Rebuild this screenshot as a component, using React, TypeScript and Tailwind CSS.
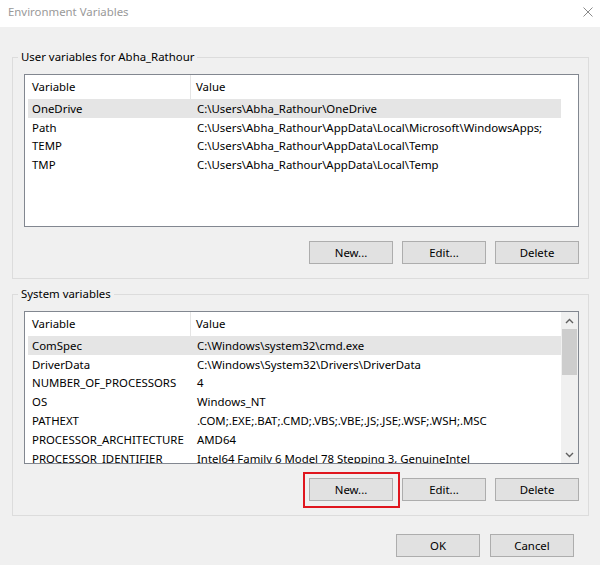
import React from "react";

type Row = { name: string; value: string };

const userVars: Row[] = [
    { name: "OneDrive", value: "C:\\Users\\Abha_Rathour\\OneDrive" },
    { name: "Path", value: "C:\\Users\\Abha_Rathour\\AppData\\Local\\Microsoft\\WindowsApps;" },
    { name: "TEMP", value: "C:\\Users\\Abha_Rathour\\AppData\\Local\\Temp" },
    { name: "TMP", value: "C:\\Users\\Abha_Rathour\\AppData\\Local\\Temp" },
];

const systemVars: Row[] = [
    { name: "ComSpec", value: "C:\\Windows\\system32\\cmd.exe" },
    { name: "DriverData", value: "C:\\Windows\\System32\\Drivers\\DriverData" },
    { name: "NUMBER_OF_PROCESSORS", value: "4" },
    { name: "OS", value: "Windows_NT" },
    { name: "PATHEXT", value: ".COM;.EXE;.BAT;.CMD;.VBS;.VBE;.JS;.JSE;.WSF;.WSH;.MSC" },
    { name: "PROCESSOR_ARCHITECTURE", value: "AMD64" },
    { name: "PROCESSOR_IDENTIFIER", value: "Intel64 Family 6 Model 78 Stepping 3, GenuineIntel" },
];

const Button = ({ label }: { label: string }) => (
    <button className="w-[84px] h-[23px] bg-[#e1e1e1] border border-[#adadad] text-black leading-none">
        {label}
    </button>
);

const VarList = ({ rows, scroll }: { rows: Row[]; scroll?: boolean }) => (
    <div className="ml-[11px] mr-[9px] h-[153px] border border-[#828790] bg-white flex overflow-hidden">
        <div className="flex-1 flex flex-col">
            <div className="h-[24px] flex items-center shrink-0">
                <div className="w-[166px] h-full flex items-center pl-[7px] border-r border-[#e5e5e5]">Variable</div>
                <div className="pl-[5px]">Value</div>
            </div>
            {rows.map((row, i) => (
                <div
                    key={row.name}
                    className={`h-[18.8px] shrink-0 flex items-center ml-[3px] whitespace-nowrap ${i === 0 ? "bg-[#e5e5e5]" : ""}`}
                >
                    <div className="w-[163px] pl-[4px]">{row.name}</div>
                    <div className="pl-[6px]">{row.value}</div>
                </div>
            ))}
        </div>
        {scroll ? (
            <div className="w-[17px] bg-[#f0f0f0] flex flex-col items-center shrink-0">
                <div className="h-[17px] flex items-center justify-center">
                    <svg width="9" height="6" viewBox="0 0 9 6">
                        <path d="M1 5 L4.5 1.5 L8 5" fill="none" stroke="#606060" strokeWidth="1.4" />
                    </svg>
                </div>
                <div className="w-[15px] h-[46px] bg-[#cdcdcd]" />
                <div className="flex-1" />
                <div className="h-[17px] flex items-center justify-center">
                    <svg width="9" height="6" viewBox="0 0 9 6">
                        <path d="M1 1 L4.5 4.5 L8 1" fill="none" stroke="#606060" strokeWidth="1.4" />
                    </svg>
                </div>
            </div>
        ) : (
            <div className="w-[17px] shrink-0" />
        )}
    </div>
);

const Group = ({ title, rows, scroll, highlight }: { title: string; rows: Row[]; scroll?: boolean; highlight?: boolean }) => (
    <fieldset className="border border-[#dcdcdc] pb-[14px]">
        <legend className="ml-[5px] px-[3px] leading-[16px]">{title}</legend>
        <div className="mt-[9px]">
            <VarList rows={rows} scroll={scroll} />
        </div>
        <div className="mt-[14px] mr-[9px] flex justify-end gap-[9px]">
            <div className="relative">
                <Button label="New..." />
                {highlight && (
                    <div className="absolute -left-[6px] -top-[6px] -right-[7px] -bottom-[7px] border-2 border-[#e0161e]" />
                )}
            </div>
            <Button label="Edit..." />
            <Button label="Delete" />
        </div>
    </fieldset>
);

export default function App() {
    return (
        <div
            className="w-[600px] h-[565px] bg-[#f0f0f0] flex flex-col text-[11.4px] text-black overflow-hidden"
            style={{ fontFamily: '"Noto Sans", "Segoe UI", sans-serif' }}
        >
            <div className="h-[27px] bg-white flex items-center justify-between pl-[8px] pr-[6px] pb-[4px] shrink-0">
                <span className="text-[#999999]">Environment Variables</span>
                <svg width="10" height="10" viewBox="0 0 10 10" className="mr-[1px]">
                    <path d="M0.5 0.5 L9.5 9.5 M9.5 0.5 L0.5 9.5" stroke="#8a8a8a" strokeWidth="1" />
                </svg>
            </div>
            <div className="pl-[12px] pr-[11px] pt-[22px] flex flex-col gap-[7px]">
                <Group title="User variables for Abha_Rathour" rows={userVars} />
                <Group title="System variables" rows={systemVars} scroll highlight />
            </div>
            <div className="mt-[18px] pr-[26px] flex justify-end gap-[10px]">
                <Button label="OK" />
                <Button label="Cancel" />
            </div>
        </div>
    );
}
